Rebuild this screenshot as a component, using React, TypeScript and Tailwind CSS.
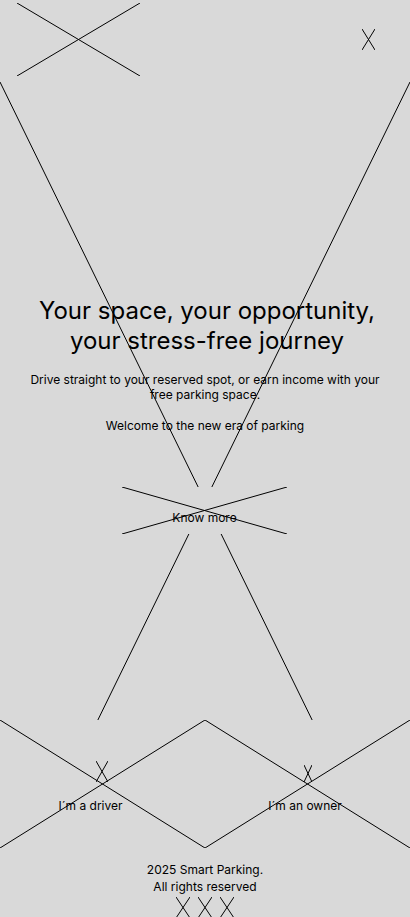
import React from 'react';

// Wireframe image placeholder: a box with a cross from corner to corner
const Placeholder: React.FC<{ className?: string; children?: React.ReactNode }> = ({ className = '', children }) => (
  <div className={`relative ${className}`}>
    <svg className="absolute inset-0 w-full h-full" preserveAspectRatio="none" viewBox="0 0 100 100">
      <line x1="0" y1="0" x2="100" y2="100" stroke="#000" strokeWidth="1" vectorEffect="non-scaling-stroke" />
      <line x1="100" y1="0" x2="0" y2="100" stroke="#000" strokeWidth="1" vectorEffect="non-scaling-stroke" />
    </svg>
    {children}
  </div>
);

const RoleCard: React.FC<{ label: string; iconClass: string; labelClass: string }> = ({ label, iconClass, labelClass }) => (
  <Placeholder className="h-full">
    <div className="relative flex flex-col items-center pt-[41px]">
      <Placeholder className={iconClass} />
      <p className={`text-[12px] leading-[15px] text-black ${labelClass}`}>{label}</p>
    </div>
  </Placeholder>
);

export default function App() {
  return (
    <div className="w-[410px] min-h-[917px] bg-[#d9d9d9] overflow-hidden" style={{ fontFamily: 'Inter, "Noto Sans", sans-serif' }}>
      {/* header */}
      <header className="h-[79px] flex items-center justify-between pl-[17px] pr-[35px]">
        <Placeholder className="w-[123px] h-[73px]" />
        <button aria-label="Menu">
          <Placeholder className="w-[13px] h-[21px]" />
        </button>
      </header>

      {/* hero */}
      <section className="relative mt-[3px] h-[638px] overflow-hidden">
        <svg className="absolute left-0 top-0 w-full h-[838px]" preserveAspectRatio="none" viewBox="0 0 100 100">
          <line x1="0" y1="0" x2="100" y2="100" stroke="#000" strokeWidth="1" vectorEffect="non-scaling-stroke" />
          <line x1="100" y1="0" x2="0" y2="100" stroke="#000" strokeWidth="1" vectorEffect="non-scaling-stroke" />
        </svg>
        <div className="relative flex flex-col items-center text-center pt-[214px] text-black">
          <h1 className="pl-[4px] text-[24px] leading-[30px] font-normal">
            Your space, your opportunity,
            <br />
            your stress-free journey
          </h1>
          <p className="mt-[16px] text-[12px] leading-[15px]">
            Drive straight to your reserved spot, or earn income with your
            <br />
            free parking space.
          </p>
          <p className="mt-[16px] text-[12px] leading-[15px]">Welcome to the new era of parking</p>
          <button className="mt-[54px] -ml-[1px] w-[165px] h-[47px] bg-[#d9d9d9]">
            <Placeholder className="w-full h-full">
              <span className="relative block pt-[23px] text-[12px] leading-[15px] text-black">Know more</span>
            </Placeholder>
          </button>
        </div>
      </section>

      {/* roles */}
      <section className="grid grid-cols-2 h-[128px]">
        <RoleCard label="I´m a driver" iconClass="w-[12px] h-[21px] mb-[16px] -ml-[2px]" labelClass="mr-[24px]" />
        <RoleCard label="I´m an owner" iconClass="w-[8px] h-[17px] mt-[4px] mb-[16px]" labelClass="mr-[5px]" />
      </section>

      {/* footer */}
      <footer className="flex flex-col items-center pt-[13px] pb-[8px] text-black">
        <p className="text-[12px] leading-[17px] text-center">
          2025 Smart Parking.
          <br />
          All rights reserved
        </p>
        <div className="mt-[2px] flex gap-[8px]">
          <Placeholder className="w-[14px] h-[21px]" />
          <Placeholder className="w-[14px] h-[21px]" />
          <Placeholder className="w-[14px] h-[21px]" />
        </div>
      </footer>
    </div>
  );
}
